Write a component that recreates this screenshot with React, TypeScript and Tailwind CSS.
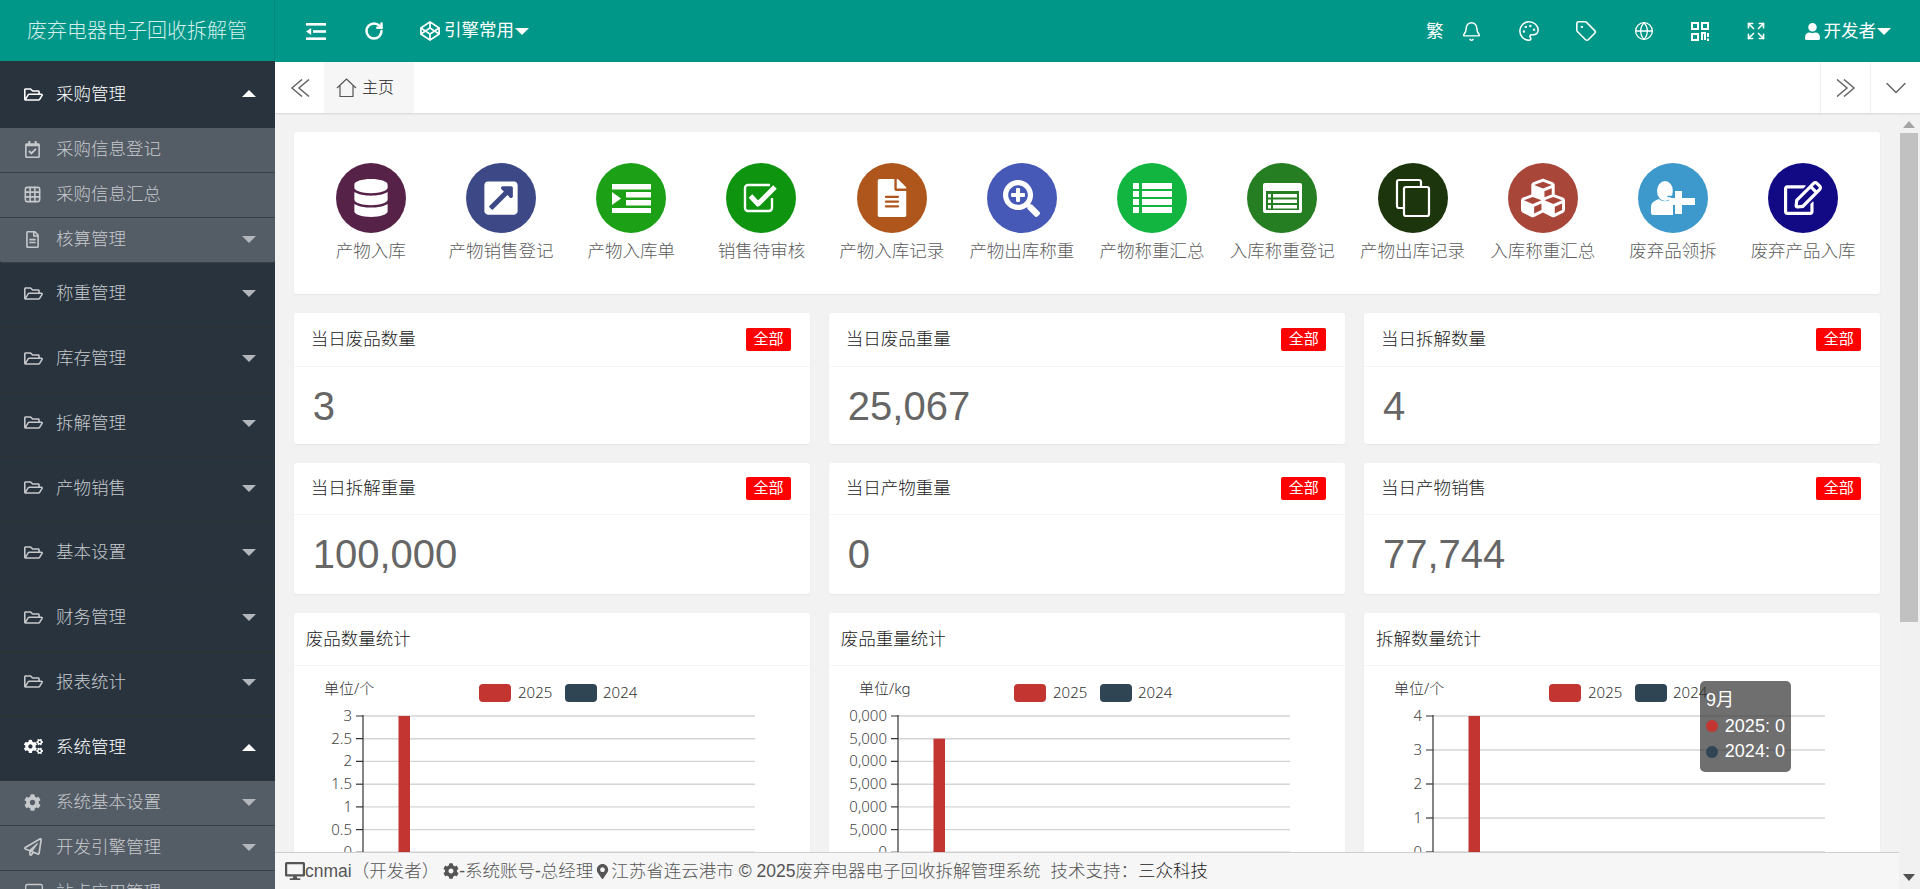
import { Bell, ChevronDown, Expand, Globe, Grid3x3, Monitor, Palette, RotateCw, Tag } from 'lucide-react';
import type { ReactNode } from 'react';
import {
  FaCodepen, FaCog, FaCogs, FaCubes, FaDatabase, FaDesktop, FaExternalLinkSquareAlt, FaFileAlt, FaMapMarkerAlt,
  FaRegCalendarCheck, FaRegEdit, FaRegFileAlt, FaRegFolderOpen, FaRegPaperPlane, FaSearchPlus, FaUser,
} from 'react-icons/fa';

const FONT = "[font-family:'Liberation_Sans','Noto_Sans_CJK_SC',sans-serif] font-light";

function Caret({ up, className }: { up?: boolean; className: string }) {
  return (
    <svg width="14" height="7" viewBox="0 0 14 7" className={className}>
      <path d={up ? 'M0 7 L7 0 L14 7 Z' : 'M0 0 L14 0 L7 7 Z'} fill="currentColor" />
    </svg>
  );
}

function MenuRow({ icon, label, open, sub, tall }: { icon: ReactNode; label: string; open?: boolean; sub?: boolean; tall?: boolean }) {
  return (
    <div
      className={`flex items-center pl-[24px] pr-[19px] ${tall ? 'h-[67px]' : sub ? 'h-[45px] pb-[2px] bg-[#545c66] border-b border-[#3a3f47]' : 'h-[64.75px] pb-[3px] border-b border-[#2f3436]'} ${open ? 'text-white' : 'text-[#c6c9cc]'}`}
    >
      <span className="w-[32px] shrink-0 text-[19px] flex items-center">{icon}</span>
      <span className="text-[17.5px] flex-1 whitespace-nowrap">{label}</span>
    </div>
  );
}

function MenuItem(props: { icon: ReactNode; label: string; open?: boolean; sub?: boolean; tall?: boolean; caret?: boolean }) {
  return (
    <div className="relative">
      <MenuRow {...props} />
      {props.caret !== false && (
        <Caret
          up={props.open}
          className={`absolute right-[19px] top-1/2 -translate-y-[5px] ${props.open ? 'text-white' : 'text-[#b3b6ba]'}`}
        />
      )}
    </div>
  );
}

function Sidebar() {
  const groupA = ['称重管理', '库存管理', '拆解管理', '产物销售', '基本设置', '财务管理', '报表统计'];
  return (
    <aside className="w-[275px] shrink-0 -mt-px h-[828px] overflow-hidden bg-[#28333e] relative z-20">
      <MenuItem tall open icon={<FaRegFolderOpen />} label="采购管理" />
      <div className="rounded-b-[3px] overflow-hidden">
        <MenuItem sub caret={false} icon={<FaRegCalendarCheck className="text-[17px]" />} label="采购信息登记" />
        <MenuItem sub caret={false} icon={<Grid3x3 size={19} strokeWidth={2} className="-ml-[1px]" />} label="采购信息汇总" />
        <MenuItem sub icon={<FaRegFileAlt className="text-[17px]" />} label="核算管理" />
      </div>
      {groupA.map((label) => (
        <MenuItem key={label} icon={<FaRegFolderOpen />} label={label} />
      ))}
      <MenuItem open icon={<FaCogs />} label="系统管理" />
      <MenuItem sub icon={<FaCog className="text-[17px]" />} label="系统基本设置" />
      <MenuItem sub icon={<FaRegPaperPlane className="text-[18px]" />} label="开发引擎管理" />
      <MenuItem sub icon={<Monitor size={20} strokeWidth={1.6} />} label="站点应用管理" />
    </aside>
  );
}

function ShrinkIcon() {
  return (
    <svg width="20" height="17" viewBox="0 0 20 17" fill="white">
      <rect x="0" y="0" width="20" height="2.6" />
      <rect x="7" y="7.2" width="13" height="2.6" />
      <rect x="0" y="14.4" width="20" height="2.6" />
      <path d="M0 8.5 L5.2 5 L5.2 12 Z" />
    </svg>
  );
}

function QrIcon() {
  return (
    <svg width="18" height="19" viewBox="0 0 18 19" fill="none" stroke="white" strokeWidth="2">
      <rect x="1" y="1" width="6" height="6" />
      <rect x="11" y="1" width="6" height="6" />
      <rect x="1" y="12" width="6" height="6" />
      <path d="M11 18 V11 H14 V18 M17 11 V15 M17 16.5 V19" />
    </svg>
  );
}

function DoubleChevron({ right }: { right?: boolean }) {
  return (
    <svg width="20" height="18" viewBox="0 0 20 18" fill="none" stroke="#666" strokeWidth="1.5" className={right ? '-scale-x-100' : ''}>
      <path d="M12 0.5 L2 9 L12 17.5 M19 0.5 L9 9 L19 17.5" />
    </svg>
  );
}

function TopBar() {
  const right = [
    { icon: <Bell size={21} strokeWidth={1.7} />, x: 'ml-[17px]' },
    { icon: <Palette size={22} strokeWidth={1.7} />, x: 'ml-[36px]' },
    { icon: <Tag size={22} strokeWidth={1.7} />, x: 'ml-[35px]' },
    { icon: <Globe size={20} strokeWidth={1.6} />, x: 'ml-[37px]' },
    { icon: <QrIcon />, x: 'ml-[37px]' },
    { icon: <Expand size={20} strokeWidth={2} />, x: 'ml-[37px]' },
  ];
  return (
    <header className="h-[62px] shrink-0 flex bg-[#009688] text-white relative z-10">
      <div className="w-[275px] h-[61px] shrink-0 flex items-center pl-[27px] border-r border-[#00897c]">
        <span className="text-[20px] whitespace-nowrap text-[#d6efec]">废弃电器电子回收拆解管</span>
      </div>
      <div className="flex-1 flex items-center pl-[31px] pr-[29px]">
        <ShrinkIcon />
        <RotateCw size={20} strokeWidth={3} className="ml-[38px]" />
        <FaCodepen className="ml-[36px] text-[20px]" />
        <span className="ml-[4px] text-[17.5px] font-normal -mt-[2px]">引擎常用</span>
        <Caret className="ml-[1px] text-white" />
        <span className="ml-auto text-[17.5px] font-normal">繁</span>
        {right.map((item, i) => (
          <span key={i} className={item.x}>
            {item.icon}
          </span>
        ))}
        <FaUser className="ml-[38px] text-[17px]" />
        <span className="ml-[3px] text-[17.5px] font-normal">开发者</span>
        <Caret className="ml-[1px] text-white" />
      </div>
    </header>
  );
}

function TabBar() {
  return (
    <div className="h-[51px] shrink-0 bg-white flex items-stretch shadow-[0_1px_2px_rgba(0,0,0,0.12)] relative z-10">
      <div className="w-[49px] flex items-center justify-center">
        <DoubleChevron />
      </div>
      <div className="w-[90px] bg-[#f6f6f6] flex items-center pl-[12px] text-[#222]">
        <svg width="21" height="20" viewBox="0 0 21 20" fill="none" stroke="#555" strokeWidth="1.2">
          <path d="M1 10 L10.5 1 L20 10 M4 8 V18.5 H17 V8" />
        </svg>
        <span className="ml-[5px] text-[16px]">主页</span>
      </div>
      <div className="flex-1" />
      <div className="w-[50px] flex items-center justify-center border-l border-[#f0f0f0]">
        <DoubleChevron right />
      </div>
      <div className="w-[50px] flex items-center justify-center border-l border-[#f0f0f0] text-[#666]">
        <ChevronDown size={36} strokeWidth={1} />
      </div>
    </div>
  );
}

function CheckSquareIcon() {
  return (
    <svg width="36" height="30" viewBox="0 0 36 30" fill="none" stroke="white">
      <path d="M29 15 V25 a3 3 0 0 1 -3 3 H5 a3 3 0 0 1 -3 -3 V5 a3 3 0 0 1 3 -3 H27" strokeWidth="2.4" />
      <path d="M7.5 13 L15 21 L32 4" strokeWidth="5" strokeLinejoin="round" />
    </svg>
  );
}

function CopyIcon() {
  return (
    <svg width="36" height="40" viewBox="0 0 36 40" fill="none" stroke="white" strokeWidth="2.2">
      <path d="M9 30 H4 a2 2 0 0 1 -2 -2 V4 a2 2 0 0 1 2 -2 H24 a2 2 0 0 1 2 2 V9" />
      <rect x="9" y="9" width="25" height="29" rx="2" />
    </svg>
  );
}

function IndentIcon() {
  return (
    <svg width="39" height="29" viewBox="0 0 39 29" fill="white">
      <rect x="0" y="0" width="39" height="5.5" />
      <rect x="14" y="8" width="25" height="5.5" />
      <rect x="14" y="16" width="25" height="5.5" />
      <rect x="0" y="24" width="39" height="5" />
      <path d="M0 8 L9 14.5 L0 21 Z" />
    </svg>
  );
}

function ListIcon() {
  const rows = [0, 8, 16, 24];
  return (
    <svg width="39" height="30" viewBox="0 0 39 30" fill="white">
      {rows.map((y) => (
        <g key={y}>
          <rect x="0" y={y} width="6" height="6" />
          <rect x="9" y={y} width="30" height="6" />
        </g>
      ))}
    </svg>
  );
}

function ListAltIcon({ color }: { color: string }) {
  const rows = [11, 16.5, 22];
  return (
    <svg width="39" height="30" viewBox="0 0 39 30">
      <rect x="0" y="0" width="39" height="30" rx="2" fill="white" />
      <rect x="3" y="8" width="33" height="19" fill={color} />
      {rows.map((y) => (
        <g key={y} fill="white">
          <rect x="5" y={y} width="3" height="3.5" />
          <rect x="10" y={y} width="24" height="3.5" />
        </g>
      ))}
    </svg>
  );
}

function UserPlusIcon() {
  return (
    <svg width="44" height="34" viewBox="0 0 44 34" fill="white">
      <ellipse cx="14" cy="10" rx="8" ry="10" />
      <path d="M0 32 V26 C0 21 5 19 8 18 C11 21 17 21 20 18 L22 19 V34 H2 A2 2 0 0 1 0 32 Z" />
      <path d="M24 10 H31 V17 H44 V24 H31 V33 H24 V24 H18 V17 H24 Z" />
      <path d="M16.5 15.5 H22.5 V8.5" fill="none" stroke="#3d98cc" strokeWidth="1.5" />
    </svg>
  );
}

const quickLinks = [
  { label: '产物入库', color: 'bg-[#572248]', icon: <FaDatabase className="text-[38px]" /> },
  { label: '产物销售登记', color: 'bg-[#3d4986]', icon: <FaExternalLinkSquareAlt className="text-[38px]" /> },
  { label: '产物入库单', color: 'bg-[#1ca016]', icon: <IndentIcon /> },
  { label: '销售待审核', color: 'bg-[#0f9410]', icon: <CheckSquareIcon /> },
  { label: '产物入库记录', color: 'bg-[#ae561b]', icon: <FaFileAlt className="text-[38px]" /> },
  { label: '产物出库称重', color: 'bg-[#4759b7]', icon: <FaSearchPlus className="text-[37px]" /> },
  { label: '产物称重汇总', color: 'bg-[#12b540]', icon: <ListIcon /> },
  { label: '入库称重登记', color: 'bg-[#267e22]', icon: <ListAltIcon color="#267e22" /> },
  { label: '产物出库记录', color: 'bg-[#1d350d]', icon: <CopyIcon /> },
  { label: '入库称重汇总', color: 'bg-[#a8463a]', icon: <FaCubes className="text-[44px]" /> },
  { label: '废弃品领拆', color: 'bg-[#3d98cc]', icon: <UserPlusIcon /> },
  { label: '废弃产品入库', color: 'bg-[#120a84]', icon: <FaRegEdit className="text-[38px]" /> },
];

function QuickLinks() {
  return (
    <div className="h-[162px] shrink-0 bg-white rounded-[3px] shadow-[0_1px_2px_rgba(0,0,0,0.05)] px-[12px] pt-[31px] grid grid-cols-12">
      {quickLinks.map((q) => (
        <div key={q.label} className="flex flex-col items-center">
          <div className={`w-[70px] h-[70px] rounded-full flex items-center justify-center text-white ${q.color}`}>{q.icon}</div>
          <span className="mt-[5px] text-[17.5px] leading-[26px] text-[#5c5c5c] whitespace-nowrap">{q.label}</span>
        </div>
      ))}
    </div>
  );
}

function StatCard({ title, value, tall }: { title: string; value: string; tall?: boolean }) {
  return (
    <div className="h-[131px] bg-white rounded-[3px] shadow-[0_1px_2px_rgba(0,0,0,0.05)] overflow-hidden">
      <div className={`${tall ? 'h-[54px]' : 'h-[52px]'} flex items-center justify-between pl-[17px] pr-[19px] border-b border-[#f6f6f6]`}>
        <span className="text-[17.5px] text-[#222]">{title}</span>
        <span className="w-[45px] h-[23px] flex items-center justify-center bg-[#ff0000] rounded-[2px] text-[15px] font-normal text-white">全部</span>
      </div>
      <div className="h-[77px] flex items-center pl-[19px] text-[40px] font-normal text-[#666]">{value}</div>
    </div>
  );
}

function Chart({ unit, ticks, barTop }: { unit: string; ticks: { label: string; y: number }[]; barTop: number }) {
  return (
    <svg width="516" height="230" viewBox="0 0 516 230" className="block">
      <g fontFamily="'Noto Sans','Noto Sans CJK SC',sans-serif" fontSize="15" fill="#333">
        <text x="30" y="28">{unit}</text>
        <rect x="185" y="18" width="32" height="18" rx="4" fill="#c23531" />
        <text x="224" y="32">2025</text>
        <rect x="271" y="18" width="32" height="18" rx="4" fill="#2f4554" />
        <text x="309" y="32">2024</text>
        {ticks.map((t) => (
          <g key={t.y}>
            <line x1="69" x2="461" y1={t.y} y2={t.y} stroke="#d4d4d4" strokeWidth="1.4" />
            <line x1="62" x2="69" y1={t.y} y2={t.y} stroke="#333" strokeWidth="1.2" />
            <text x="58" y={t.y + 5} textAnchor="end" fill="#444">{t.label}</text>
          </g>
        ))}
        <line x1="69" x2="69" y1="49" y2="230" stroke="#333" strokeWidth="1.2" />
        <rect x="104.5" y={barTop} width="11.5" height={230 - barTop} fill="#c23531" />
      </g>
    </svg>
  );
}

const sixTicks = [50, 72.7, 95.4, 118.2, 140.9, 163.6, 186.3];

function ChartCard({ title, children, tip }: { title: string; children: ReactNode; tip?: boolean }) {
  return (
    <div className="relative h-[280px] bg-white rounded-[3px] shadow-[0_1px_2px_rgba(0,0,0,0.05)] overflow-hidden">
      <div className="h-[53px] flex items-center pl-[12px] border-b border-[#f6f6f6] text-[17.5px] text-[#222]">{title}</div>
      {children}
      {tip && (
        <div className="absolute left-[336px] top-[68px] w-[91px] h-[91px] rounded-[5px] bg-[rgba(50,50,50,0.7)] px-[6px] pt-[7px] text-[18px] leading-[25.5px] font-normal text-white whitespace-nowrap">
          <div>9月</div>
          <div className="flex items-center">
            <span className="w-[12px] h-[12px] rounded-full bg-[#c23531] mr-[7px]" />2025: 0
          </div>
          <div className="flex items-center">
            <span className="w-[12px] h-[12px] rounded-full bg-[#2f4554] mr-[7px]" />2024: 0
          </div>
        </div>
      )}
    </div>
  );
}

function Footer() {
  return (
    <footer className="h-[37px] shrink-0 flex items-center pl-[10px] bg-[#f6f6f6] border-t border-[#cfcfcf] text-[17.5px] text-[#555] whitespace-nowrap">
      <FaDesktop className="text-[20px]" />
      <span>cnmai（开发者）</span>
      <FaCog className="ml-[4px] text-[16px]" />
      <span>-系统账号-总经理</span>
      <FaMapMarkerAlt className="ml-[2px] text-[15px]" />
      <span className="ml-[1px]">江苏省连云港市 © 2025废弃电器电子回收拆解管理系统</span>
      <span className="ml-[10px]">技术支持：</span>
      <span className="text-[#222]">三众科技</span>
    </footer>
  );
}

function Scrollbar() {
  return (
    <div className="w-[21px] shrink-0 bg-[#f1f1f1] flex flex-col items-center pr-[2px] pl-[1px]">
      <svg width="12" height="7" viewBox="0 0 12 7" className="mt-[8px] mb-[5px] shrink-0">
        <path d="M0 7 L6 0 L12 7 Z" fill="#a3a3a3" />
      </svg>
      <div className="w-full h-[489px] bg-[#c1c1c1] shrink-0" />
      <div className="flex-1" />
      <svg width="12" height="7" viewBox="0 0 12 7" className="mb-[8px] shrink-0">
        <path d="M0 0 L12 0 L6 7 Z" fill="#505050" />
      </svg>
    </div>
  );
}

export default function App() {
  return (
    <div className={`w-[1920px] h-[889px] overflow-hidden flex flex-col bg-[#f2f2f2] ${FONT}`}>
      <TopBar />
      <div className="flex flex-1 min-h-0">
        <Sidebar />
        <main className="flex-1 min-w-0 flex flex-col">
          <TabBar />
          <div className="flex flex-1 min-h-0">
            <div className="flex-1 min-w-0 flex flex-col">
              <div className="flex-1 min-h-0 overflow-hidden px-[18.75px] pt-[19px] flex flex-col gap-[19px]">
                <QuickLinks />
                <div className="shrink-0 grid grid-cols-3 gap-x-[18.75px] gap-y-[19px]">
                  <StatCard tall title="当日废品数量" value="3" />
                  <StatCard tall title="当日废品重量" value="25,067" />
                  <StatCard tall title="当日拆解数量" value="4" />
                  <StatCard title="当日拆解重量" value="100,000" />
                  <StatCard title="当日产物重量" value="0" />
                  <StatCard title="当日产物销售" value="77,744" />
                  <ChartCard title="废品数量统计">
                    <Chart
                      unit="单位/个"
                      barTop={50}
                      ticks={['3', '2.5', '2', '1.5', '1', '0.5', '0'].map((label, i) => ({ label, y: sixTicks[i] }))}
                    />
                  </ChartCard>
                  <ChartCard title="废品重量统计">
                    <Chart
                      unit="单位/kg"
                      barTop={72.7}
                      ticks={['0,000', '5,000', '0,000', '5,000', '0,000', '5,000', '0'].map((label, i) => ({ label, y: sixTicks[i] }))}
                    />
                  </ChartCard>
                  <ChartCard tip title="拆解数量统计">
                    <Chart
                      unit="单位/个"
                      barTop={50}
                      ticks={['4', '3', '2', '1', '0'].map((label, i) => ({ label, y: 50 + i * 34 }))}
                    />
                  </ChartCard>
                </div>
              </div>
              <Footer />
            </div>
            <Scrollbar />
          </div>
        </main>
      </div>
    </div>
  );
}
